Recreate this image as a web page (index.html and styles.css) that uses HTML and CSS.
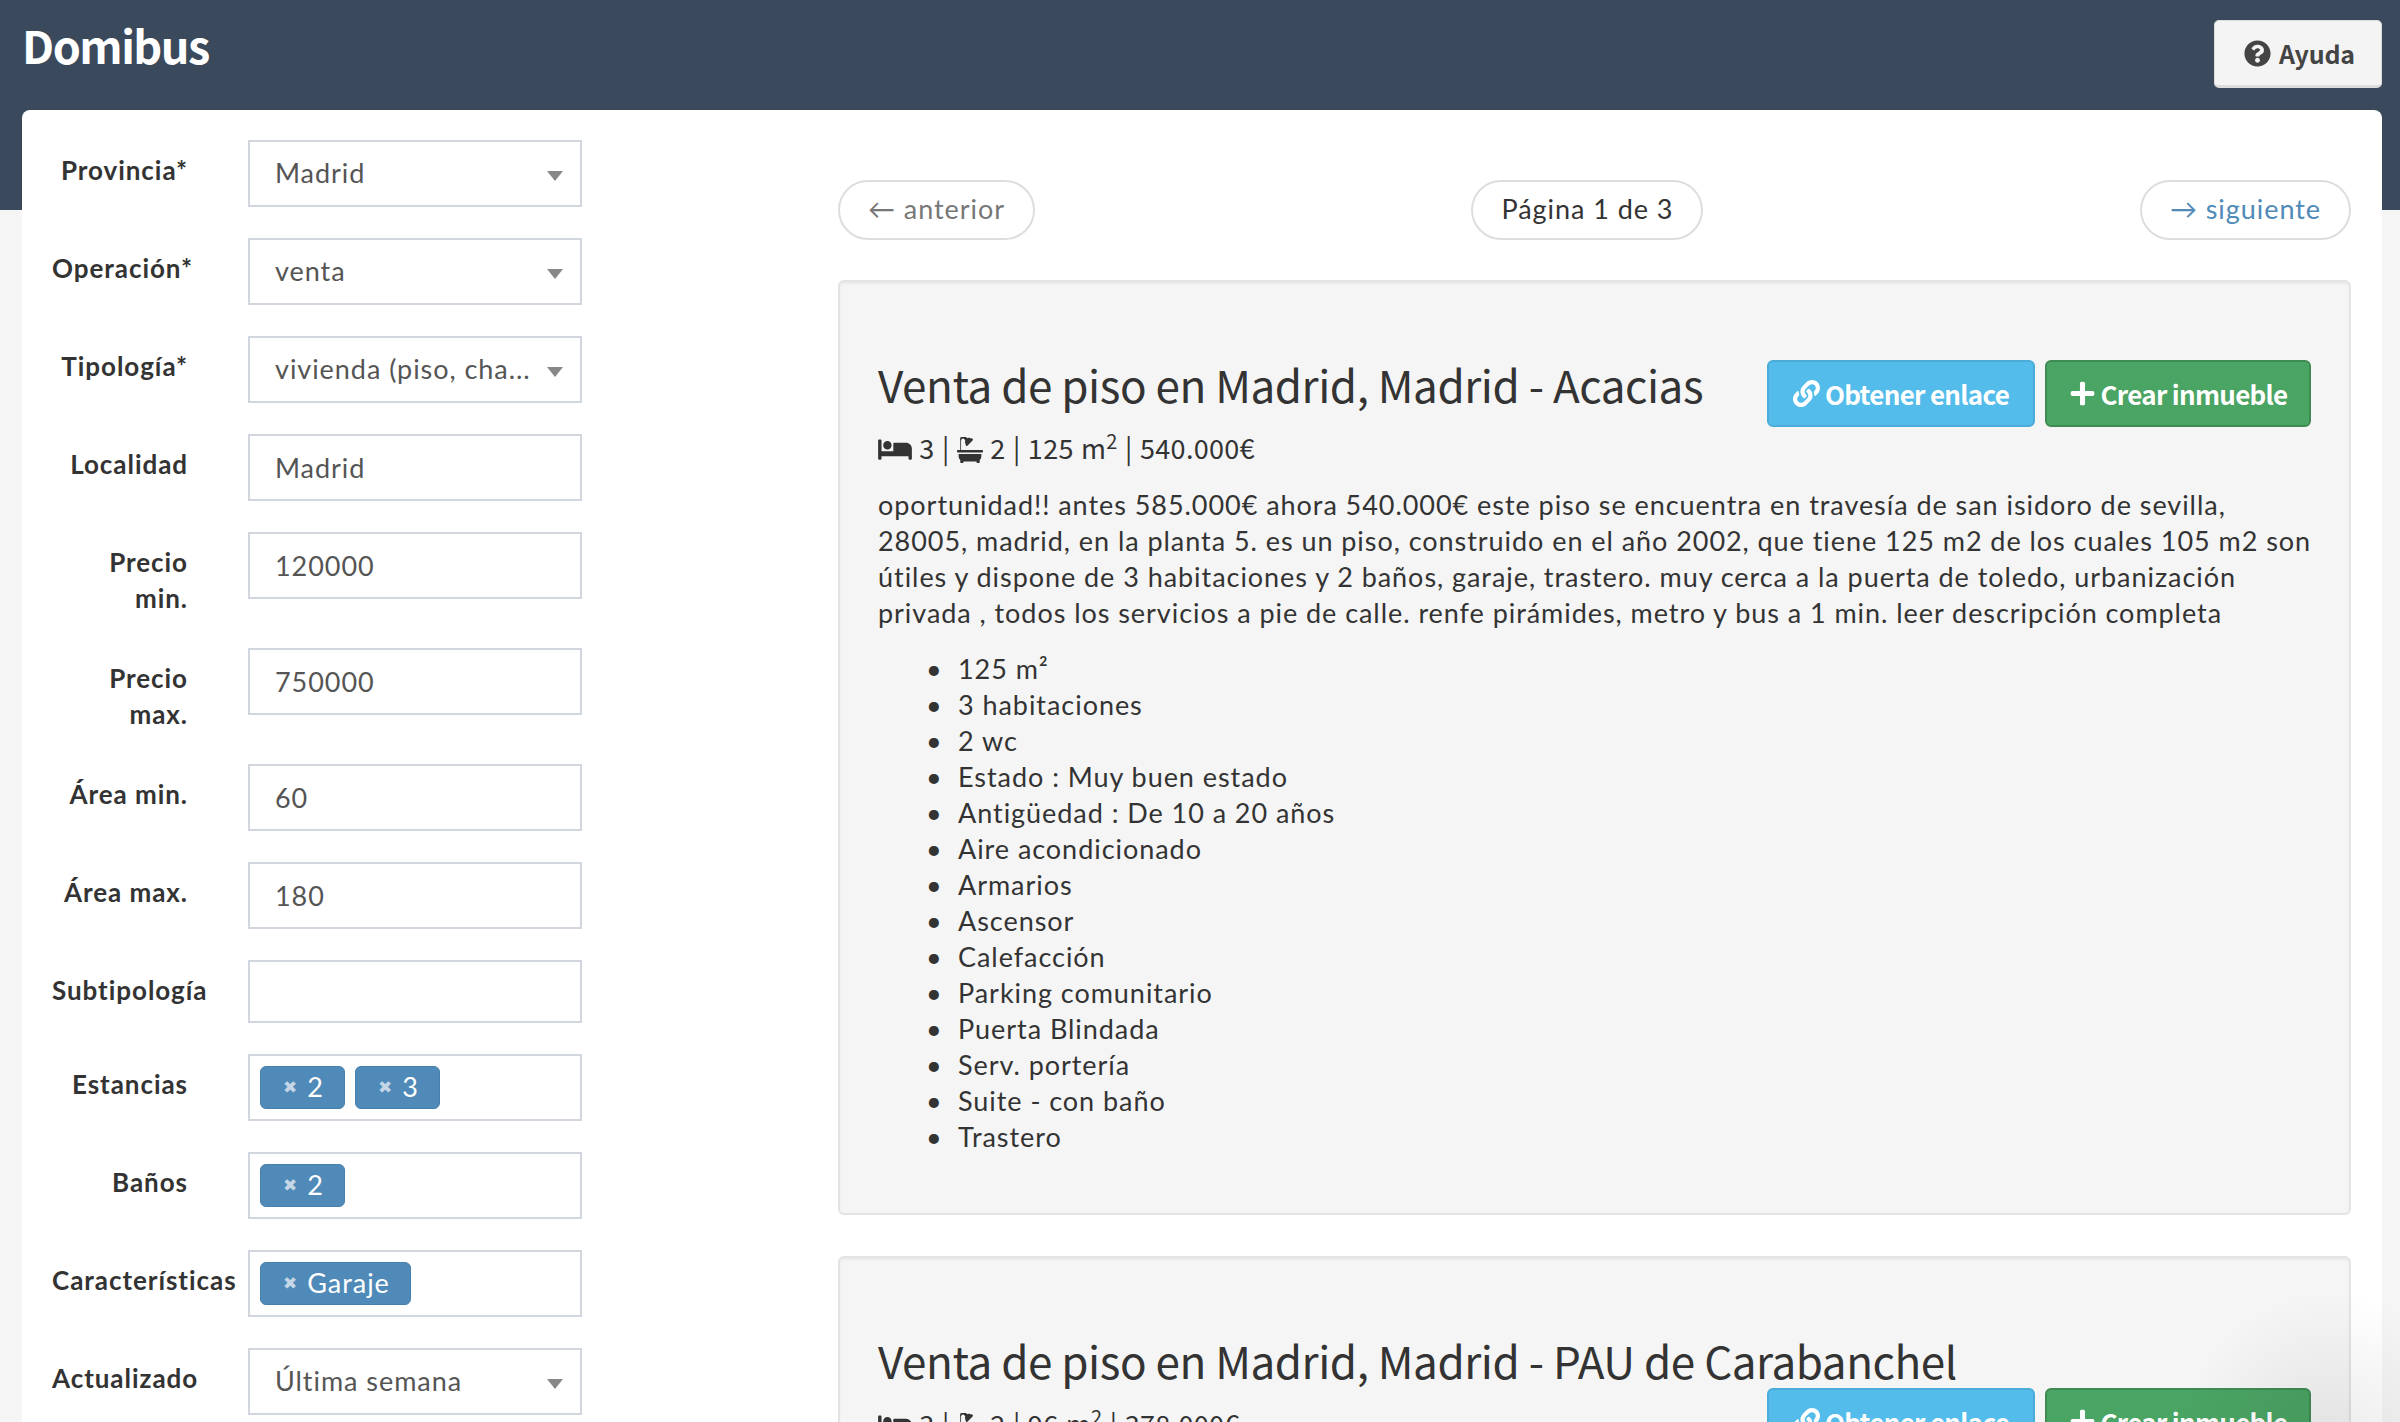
FILE: index.html
```html
<!DOCTYPE html>
<html lang="es">
<head>
<meta charset="utf-8">
<title>Domibus</title>
<link rel="stylesheet" href="styles.css">
</head>
<body>
<svg class="sprite" aria-hidden="true">
  <symbol id="i-question" viewBox="0 0 512 512"><path d="M504 256c0 136.997-111.043 248-248 248S8 392.997 8 256C8 119.083 119.043 8 256 8s248 111.083 248 248zM262.655 90c-54.497 0-89.255 22.957-116.549 63.758-3.536 5.286-2.353 12.415 2.715 16.258l34.699 26.31c5.205 3.947 12.621 3.008 16.665-2.122 17.864-22.658 30.113-35.797 57.303-35.797 20.429 0 45.698 13.148 45.698 32.958 0 14.976-12.363 22.667-32.534 33.976C247.128 238.528 216 254.941 216 296v4c0 6.627 5.373 12 12 12h56c6.627 0 12-5.373 12-12v-1.333c0-28.462 83.186-29.647 83.186-106.667 0-58.002-60.165-102-116.531-102zM256 338c-25.365 0-46 20.635-46 46 0 25.364 20.635 46 46 46s46-20.636 46-46c0-25.365-20.635-46-46-46z"/></symbol>
  <symbol id="i-link" viewBox="0 0 512 512"><path d="M326.612 185.391c59.747 59.809 58.927 155.698.36 214.59-.11.12-.24.25-.36.37l-67.2 67.2c-59.27 59.27-155.699 59.262-214.96 0-59.27-59.26-59.27-155.7 0-214.96l37.106-37.106c9.84-9.84 26.786-3.3 27.294 10.606.648 17.722 3.826 35.527 9.69 52.721 1.986 5.822.567 12.262-3.783 16.612l-13.087 13.087c-28.026 28.026-28.905 73.66-1.155 101.96 28.024 28.579 74.086 28.749 102.325.51l67.2-67.19c28.191-28.191 28.073-73.757 0-101.83-3.701-3.694-7.429-6.564-10.341-8.569a16.037 16.037 0 0 1-6.947-12.606c-.396-10.567 3.348-21.456 11.698-29.806l21.054-21.055c5.521-5.521 14.182-6.199 20.584-1.731a152.482 152.482 0 0 1 20.522 17.197zM467.547 44.449c-59.261-59.262-155.69-59.27-214.96 0l-67.2 67.2c-.12.12-.25.25-.36.37-58.566 58.892-59.387 154.781.36 214.59a152.454 152.454 0 0 0 20.521 17.196c6.402 4.468 15.064 3.789 20.584-1.731l21.054-21.055c8.35-8.35 12.094-19.239 11.698-29.806a16.037 16.037 0 0 0-6.947-12.606c-2.912-2.005-6.64-4.875-10.341-8.569-28.073-28.073-28.191-73.639 0-101.83l67.2-67.19c28.239-28.239 74.3-28.069 102.325.51 27.75 28.3 26.872 73.934-1.155 101.96l-13.087 13.087c-4.35 4.35-5.769 10.79-3.783 16.612 5.864 17.194 9.042 34.999 9.69 52.721.509 13.906 17.454 20.446 27.294 10.606l37.106-37.106c59.271-59.259 59.271-155.699.001-214.959z"/></symbol>
  <symbol id="i-plus" viewBox="0 0 448 512"><path d="M416 208H272V64c0-17.67-14.33-32-32-32h-32c-17.67 0-32 14.33-32 32v144H32c-17.67 0-32 14.33-32 32v32c0 17.67 14.33 32 32 32h144v144c0 17.67 14.33 32 32 32h32c17.67 0 32-14.33 32-32V304h144c17.67 0 32-14.33 32-32v-32c0-17.67-14.33-32-32-32z"/></symbol>
  <symbol id="i-bed" viewBox="0 0 640 512"><path d="M176 256c44.11 0 80-35.89 80-80s-35.89-80-80-80-80 35.89-80 80 35.89 80 80 80zm352-128H304c-8.84 0-16 7.16-16 16v144H64V80c0-8.84-7.16-16-16-16H16C7.16 64 0 71.16 0 80v352c0 8.84 7.16 16 16 16h32c8.84 0 16-7.16 16-16v-48h512v48c0 8.84 7.16 16 16 16h32c8.84 0 16-7.16 16-16V240c0-61.86-50.14-112-112-112z"/></symbol>
  <symbol id="i-bath" viewBox="0 0 512 512"><path d="M32 384a95.4 95.4 0 0 0 32 71.09V496a16 16 0 0 0 16 16h32a16 16 0 0 0 16-16v-16h256v16a16 16 0 0 0 16 16h32a16 16 0 0 0 16-16v-40.91A95.4 95.4 0 0 0 480 384v-48H32zM496 256H80V69.25a37.25 37.25 0 0 1 63.6-26.35L163 62.25c-10.79 24.61-7.36 53.14 8.91 74.35l-.4.4a16 16 0 0 0 0 22.66l11.31 11.31a16 16 0 0 0 22.63 0L311 65.37a16 16 0 0 0 0-22.62l-11.29-11.32a16 16 0 0 0-22.63 0l-.4.4c-21.21-16.26-49.73-19.7-74.35-8.9L183 3.55A69.25 69.25 0 0 0 64 69.25V256H16a16 16 0 0 0-16 16v16a16 16 0 0 0 16 16h480a16 16 0 0 0 16-16v-16a16 16 0 0 0-16-16z"/></symbol>
</svg>

<header class="topbar">
  <h1 class="brand">Domibus</h1>
  <a class="help"><svg class="icon icon-help"><use href="#i-question"/></svg>Ayuda</a>
</header>

<main class="panel">
  <form class="filters">
    <div class="row"><label class="lbl">Provincia*</label><div class="ctl select"><span class="val">Madrid</span></div></div>
    <div class="row"><label class="lbl">Operación*</label><div class="ctl select"><span class="val">venta</span></div></div>
    <div class="row"><label class="lbl">Tipología*</label><div class="ctl select"><span class="val">vivienda (piso, cha...</span></div></div>
    <div class="row"><label class="lbl">Localidad</label><div class="ctl"><span class="val">Madrid</span></div></div>
    <div class="row"><label class="lbl wrap">Precio min.</label><div class="ctl"><span class="val">120000</span></div></div>
    <div class="row"><label class="lbl wrap">Precio max.</label><div class="ctl"><span class="val">750000</span></div></div>
    <div class="row"><label class="lbl">Área min.</label><div class="ctl"><span class="val">60</span></div></div>
    <div class="row"><label class="lbl">Área max.</label><div class="ctl"><span class="val">180</span></div></div>
    <div class="row"><label class="lbl">Subtipología</label><div class="ctl short"></div></div>
    <div class="row"><label class="lbl">Estancias</label><div class="ctl tags"><span class="tag"><i class="x">✖</i>2</span><span class="tag"><i class="x">✖</i>3</span></div></div>
    <div class="row"><label class="lbl">Baños</label><div class="ctl tags"><span class="tag"><i class="x">✖</i>2</span></div></div>
    <div class="row"><label class="lbl">Características</label><div class="ctl tags"><span class="tag"><i class="x">✖</i>Garaje</span></div></div>
    <div class="row"><label class="lbl">Actualizado</label><div class="ctl select"><span class="val">Última semana</span></div></div>
  </form>

  <section class="results">
    <nav class="pager">
      <a class="pill muted">← anterior</a>
      <span class="pill dark">Página 1 de 3</span>
      <a class="pill blue">→ siguiente</a>
    </nav>

    <article class="card">
      <h2 class="title">Venta de piso en Madrid, Madrid - Acacias</h2>
      <div class="actions">
        <a class="btn btn-info"><svg class="icon icon-btn"><use href="#i-link"/></svg>Obtener enlace</a>
        <a class="btn btn-ok"><svg class="icon icon-btn"><use href="#i-plus"/></svg>Crear inmueble</a>
      </div>
      <p class="meta"><svg class="icon icon-bed"><use href="#i-bed"/></svg> 3 | <svg class="icon icon-bath"><use href="#i-bath"/></svg> 2 | 125 m<sup>2</sup> | 540.000€</p>
      <p class="desc">oportunidad!! antes 585.000€ ahora 540.000€ este piso se encuentra en travesía de san isidoro de sevilla, 28005, madrid, en la planta 5. es un piso, construido en el año 2002, que tiene 125 m2 de los cuales 105 m2 son útiles y dispone de 3 habitaciones y 2 baños, garaje, trastero. muy cerca a la puerta de toledo, urbanización privada , todos los servicios a pie de calle. renfe pirámides, metro y bus a 1 min. leer descripción completa</p>
      <ul class="feats">
        <li>125 m²</li>
        <li>3 habitaciones</li>
        <li>2 wc</li>
        <li>Estado : Muy buen estado</li>
        <li>Antigüedad : De 10 a 20 años</li>
        <li>Aire acondicionado</li>
        <li>Armarios</li>
        <li>Ascensor</li>
        <li>Calefacción</li>
        <li>Parking comunitario</li>
        <li>Puerta Blindada</li>
        <li>Serv. portería</li>
        <li>Suite - con baño</li>
        <li>Trastero</li>
      </ul>
    </article>

    <article class="card">
      <h2 class="title">Venta de piso en Madrid, Madrid - PAU de Carabanchel</h2>
      <div class="actions">
        <a class="btn btn-info"><svg class="icon icon-btn"><use href="#i-link"/></svg>Obtener enlace</a>
        <a class="btn btn-ok"><svg class="icon icon-btn"><use href="#i-plus"/></svg>Crear inmueble</a>
      </div>
      <p class="meta"><svg class="icon icon-bed"><use href="#i-bed"/></svg> 3 | <svg class="icon icon-bath"><use href="#i-bath"/></svg> 2 | 96 m<sup>2</sup> | 378.000€</p>
    </article>
  </section>
</main>
<div class="corner-glow"></div>
</body>
</html>
```

FILE: styles.css
```css
* { box-sizing: border-box; }
html, body { margin: 0; height: 1422px; overflow: hidden; }
body {
  background: #f5f5f5;
  color: #333;
  font-family: "Lato", "Noto Sans", sans-serif;
  font-size: 27px;
  letter-spacing: .95px;
  line-height: 36px;
  position: relative;
}
.sprite { display: none; }
.icon { fill: currentColor; display: inline-block; }

.topbar {
  height: 210px;
  background: #3a4a5c;
  display: flex;
  justify-content: space-between;
  align-items: flex-start;
  padding: 20px 18px 0 22px;
}
.brand {
  margin: -1px 0 0;
  color: #fff;
  font-family: "Noto Sans CJK SC", "Noto Sans", sans-serif;
  font-size: 45px;
  font-weight: 700;
  letter-spacing: -1.5px;
  line-height: 52px;
}
.help {
  width: 168px;
  height: 68px;
  padding-left: 3px;
  background: #f4f4f4;
  border: 1px solid #ddd;
  border-bottom: 3px solid #ddd;
  border-radius: 5px;
  color: #444;
  font-family: "Noto Sans CJK SC", "Noto Sans", sans-serif;
  font-size: 25px;
  font-weight: 700;
  letter-spacing: -.2px;
  display: flex;
  align-items: center;
  justify-content: center;
  gap: 8px;
}
.icon-help { width: 27px; height: 27px; }

.panel {
  margin: -100px 18px 0 22px;
  height: 1312px;
  background: #fff;
  border-radius: 8px 8px 0 0;
  display: flex;
  overflow: hidden;
}

.filters {
  width: 816px;
  flex: none;
  padding: 30px 0 0 30px;
}
.row {
  display: grid;
  grid-template-columns: 136px 334px;
  column-gap: 60px;
  margin-bottom: 31px;
  align-items: start;
}
.lbl {
  padding: 12px 0 1px;
  font-size: 26px;
  font-weight: 700;
  text-align: right;
  white-space: nowrap;
  line-height: 36px;
}
.lbl.wrap { white-space: normal; padding-left: 40px; }
.ctl {
  position: relative;
  height: 67px;
  border: 2px solid #d2d6de;
  padding: 0 20px 0 25px;
  color: #555;
  display: flex;
  align-items: center;
  overflow: hidden;
}
.ctl.short { height: 63px; }
.val { white-space: nowrap; }
.select { padding-right: 40px; padding-bottom: 2px; }
.select::after {
  content: "";
  position: absolute;
  right: 17px;
  top: 29px;
  border-left: 8px solid transparent;
  border-right: 8px solid transparent;
  border-top: 10px solid #888;
}
.tags {
  padding: 10px;
  align-items: flex-start;
  gap: 10px;
}
.tag {
  height: 43px;
  background: #4f8ab8;
  border: 1px solid #4680ac;
  border-radius: 6px;
  color: #fff;
  padding: 0 20px 2px 22px;
  display: flex;
  align-items: center;
  line-height: 38px;
}
.x {
  color: #c5d7e6;
  font-family: "DejaVu Sans", sans-serif;
  font-style: normal;
  font-size: 17px;
  letter-spacing: 0;
  margin-right: 10px;
}

.results {
  width: 1513px;
  flex: none;
  padding-top: 70px;
}
.pager {
  display: flex;
  justify-content: space-between;
  margin-bottom: 40px;
}
.pill {
  height: 60px;
  border: 2px solid #ddd;
  border-radius: 30px;
  padding: 0 28px 2px;
  display: flex;
  align-items: center;
  background: #fff;
}
.muted { color: #777; }
.dark { color: #333; }
.blue { color: #4f8ab8; }

.card {
  background: #f5f5f5;
  border: 2px solid #e3e3e3;
  border-radius: 6px;
  box-shadow: inset 0 2px 2px rgba(0, 0, 0, .05);
  padding: 78px 38px 58px 38px;
  margin-bottom: 41px;
}
.card::after { content: ""; display: block; clear: both; }
.title {
  float: left;
  margin: 0;
  font-family: "Noto Sans CJK SC", "Noto Sans", sans-serif;
  font-size: 44px;
  font-weight: 400;
  letter-spacing: -.46px;
  line-height: 48px;
  padding-bottom: 4px;
}
.actions {
  float: right;
  display: flex;
  gap: 10px;
}
.btn {
  height: 67px;
  border-radius: 6px;
  color: #fff;
  font-family: "Noto Sans CJK SC", "Noto Sans", sans-serif;
  font-size: 26px;
  font-weight: 700;
  letter-spacing: -.7px;
  display: flex;
  align-items: center;
  justify-content: center;
  gap: 5px;
}
.btn-info { width: 268px; background: #54bceb; border: 2px solid #4bacd8; }
.btn-ok { width: 266px; background: #4aa463; border: 2px solid #3e8c54; }
.icon-btn { width: 27px; height: 27px; }
.meta {
  clear: left;
  margin: 0;
  padding-top: 18px;
  font-family: "Noto Sans CJK SC", "Noto Sans", sans-serif;
  font-size: 27px;
  letter-spacing: .3px;
  word-spacing: 1px;
}
.meta sup { font-size: 20px; line-height: 0; }
.icon-bed { width: 34px; height: 27px; vertical-align: -4px; }
.icon-bath { width: 26px; height: 26px; vertical-align: -4px; }
.desc { margin: 21px -6px 0 0; }
.feats { margin: 20px 0 0; padding-left: 80px; list-style: none; }
.feats li { display: flex; }
.feats li::before {
  content: "•";
  flex: none;
  width: 32px;
  margin-left: -32px;
}

.corner-glow {
  position: absolute;
  right: 0;
  bottom: 0;
  width: 320px;
  height: 170px;
  background: radial-gradient(circle 150px at 250px 190px, rgba(0, 0, 0, .08), rgba(0, 0, 0, 0));
  pointer-events: none;
}
```
